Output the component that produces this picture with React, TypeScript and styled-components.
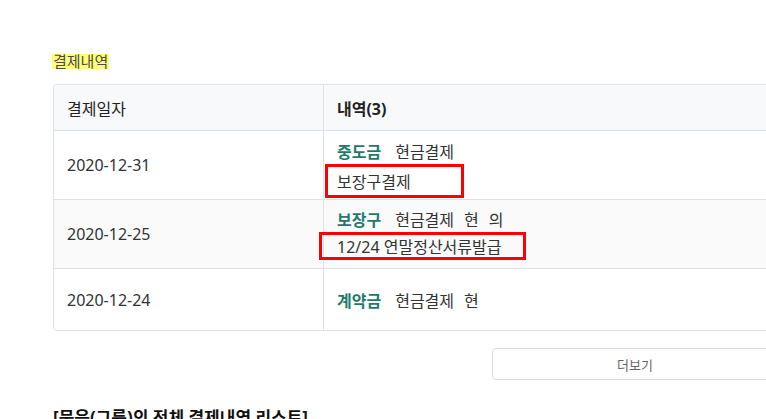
import styled, { createGlobalStyle } from 'styled-components'

const GlobalStyle = createGlobalStyle`
  html, body {
    margin: 0;
    padding: 0;
    background: #fff;
    overflow: hidden;
  }
  body {
    font-family: 'Noto Sans', 'Noto Sans CJK KR', sans-serif;
    color: #333;
  }
`

type Payment = {
  date: string
  label: string
  words: string[]
  note?: string
  noteWidth?: number
  noteHeight?: number
  noteInset?: number
  noteLift?: number
}

const payments: Payment[] = [
  { date: '2020-12-31', label: '중도금', words: ['현금결제'], note: '보장구결제', noteWidth: 139, noteHeight: 34, noteInset: 12, noteLift: 8 },
  { date: '2020-12-25', label: '보장구', words: ['현금결제', '현', '의'], note: '12/24 연말정산서류발급', noteWidth: 207, noteHeight: 28, noteInset: 18, noteLift: 0 },
  { date: '2020-12-24', label: '계약금', words: ['현금결제', '현'] }
]

const App = () => {
  return (
    <Page>
      <GlobalStyle />
      <Title>
        <Marked>결제내역</Marked>
      </Title>
      <Table>
        <HeadRow>
          <HeadCell>결제일자</HeadCell>
          <HeadCell $bold>내역(3)</HeadCell>
        </HeadRow>
        {payments.map((p, i) => (
          <Row key={p.date} $h={i === payments.length - 1 ? 61 : 68} $striped={i % 2 === 1} $last={i === payments.length - 1}>
            <DateCell>{p.date}</DateCell>
            <DetailCell>
              <Line>
                <Label>{p.label}</Label>
                {p.words.map((w, j) => (
                  <Word key={j}>{w}</Word>
                ))}
              </Line>
              {p.note && (
                <Note $w={p.noteWidth!} $h={p.noteHeight!} $inset={p.noteInset!} $lift={p.noteLift!}>
                  {p.note}
                </Note>
              )}
            </DetailCell>
          </Row>
        ))}
      </Table>
      <ButtonRow>
        <MoreButton type="button">더보기</MoreButton>
      </ButtonRow>
      <SectionHeading>[묶음(그룹)의 전체 결제내역 리스트]</SectionHeading>
    </Page>
  )
}

const Page = styled.div`
  width: 725px;
  padding: 54px 0 0 53px;
`

const Title = styled.div`
  height: 15px;
  margin: 0 0 15px -1px;
  font-size: 15px;
  line-height: 15px;
`

const Marked = styled.span`
  display: inline-block;
  height: 15px;
  padding: 0 1px;
  background: #ffff73;
  color: #4a4a4a;
`

const Table = styled.div`
  border: 1px solid #dee2e6;
  border-radius: 4px;
  overflow: hidden;
  font-size: 16px;
`

const HeadRow = styled.div`
  display: grid;
  grid-template-columns: 269px 1fr;
  height: 45px;
  background: #f8f9fa;
  border-bottom: 1px solid #dee2e6;
`

const HeadCell = styled.div<{ $bold?: boolean }>`
  display: flex;
  align-items: center;
  padding: 0 13px;
  font-size: 16px;
  font-weight: ${(p) => (p.$bold ? 700 : 400)};
  color: #222;
  & + & {
    border-left: 1px solid #dee2e6;
  }
`

const Row = styled.div<{ $h: number; $striped: boolean; $last: boolean }>`
  display: grid;
  grid-template-columns: 269px 1fr;
  height: ${(p) => p.$h}px;
  background: ${(p) => (p.$striped ? '#fafafa' : '#fff')};
  border-bottom: ${(p) => (p.$last ? 'none' : '1px solid #dee2e6')};
`

const DateCell = styled.div`
  display: flex;
  align-items: center;
  padding: 0 13px;
  color: #333;
`

const DetailCell = styled.div`
  display: flex;
  flex-direction: column;
  justify-content: center;
  padding: 0 13px;
  border-left: 1px solid #dee2e6;
`

const Line = styled.div`
  display: flex;
  align-items: center;
  height: 22px;
  gap: 10px;
  color: #333;
  white-space: nowrap;
`

const Label = styled.span`
  font-weight: 700;
  color: #1f7a6c;
  margin-right: 4px;
`

const Word = styled.span``

const Note = styled.div<{ $w: number; $h: number; $inset: number; $lift: number }>`
  box-sizing: border-box;
  display: flex;
  align-items: center;
  width: ${(p) => p.$w}px;
  height: ${(p) => p.$h}px;
  margin: 2px 0 ${(p) => -p.$lift}px ${(p) => -p.$inset}px;
  padding-left: ${(p) => p.$inset - 3}px;
  border: 3px solid #ff0000;
  color: #333;
  white-space: nowrap;
`

const ButtonRow = styled.div`
  display: flex;
  justify-content: flex-end;
  margin-top: 17px;
`

const MoreButton = styled.button`
  width: 286px;
  height: 32px;
  border: 1px solid #dcdcdc;
  border-radius: 4px;
  background: #fff;
  color: #666;
  font-family: 'Noto Sans', 'Noto Sans CJK KR', sans-serif;
  font-size: 13px;
  cursor: pointer;
`

const SectionHeading = styled.div`
  margin-top: 24px;
  font-size: 17px;
  font-weight: 700;
  color: #111;
  white-space: nowrap;
`

export default App
